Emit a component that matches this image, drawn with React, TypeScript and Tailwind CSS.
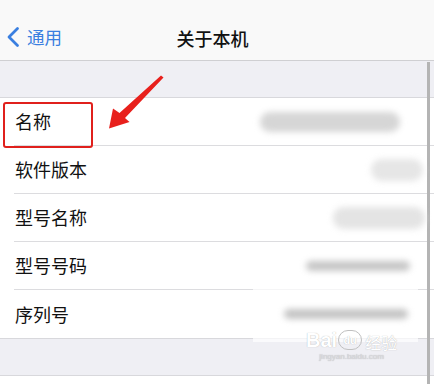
const rows = [
  { label: '名称', value: 'w-[140px] h-[20px] bg-[#d6d6d6] mr-[34px]' },
  { label: '软件版本', value: 'w-[52px] h-[22px] bg-[#e6e6e6] mr-[11px]' },
  { label: '型号名称', value: 'w-[92px] h-[22px] bg-[#e4e4e4] mr-[9px]' },
  { label: '型号号码', value: 'w-[104px] h-[10px] bg-[#c6c6c6] mr-[24px]' },
  { label: '序列号', value: 'w-[124px] h-[10px] bg-[#c4c4c4] mr-[26px]' },
];

export default function App() {
  return (
    <div
      className="relative w-[434px] h-[384px] overflow-hidden bg-[#efeff4]"
      style={{ fontFamily: '"Noto Sans CJK SC", "Noto Sans", sans-serif' }}
    >
      {/* Nav bar */}
      <div className="h-[61px] bg-[#f9f9f9] border-b border-[#cfcfd2] grid grid-cols-[1fr_auto_1fr] items-start pt-[26px] pr-[9px]">
        <div className="flex items-center gap-[7px] pl-[6px] text-[#3a7fe0]">
          <svg width="14" height="22" viewBox="0 0 14 22" fill="none">
            <path d="M11.5 2.5 L3 11 L11.5 19.5" stroke="#3a7fe0" strokeWidth="2.8" strokeLinecap="round" strokeLinejoin="round" />
          </svg>
          <span className="text-[17.5px] leading-[22px]">通用</span>
        </div>
        <div className="text-[18px] leading-[24px] text-[#111] font-medium">关于本机</div>
        <div />
      </div>

      {/* Gray section header */}
      <div className="h-[36px]" />

      {/* Rows */}
      <div className="bg-white border-t border-[#d8d8dc] border-b">
        {rows.map((r, i) => (
          <div key={r.label} className="pl-[14px]">
            <div
              className={
                'h-[48px] flex items-center justify-between ' +
                (i < rows.length - 1 ? 'border-b border-[#dcdcdf]' : '')
              }
            >
              <span className="pl-[1px] text-[18px] text-[#111]">{r.label}</span>
              <div className={'relative z-10 rounded-full blur-[3px] ' + r.value} />
            </div>
          </div>
        ))}
      </div>

      {/* Bottom gray section */}
      <div className="h-[37px] border-b border-[#d8d8dc]" />
      <div className="h-[12px] bg-white" />

      {/* Watermark backdrop */}
      <div className="absolute left-[253px] top-[280px] w-[165px] h-[62px] bg-white/70" />

      {/* Baidu watermark */}
      <div className="absolute left-[306px] top-[330px] flex flex-col items-center text-white [text-shadow:0_0_1px_#a8a8a8]">
        <div className="flex items-end gap-[1px] leading-none">
          <span className="text-[20px] font-bold" style={{ fontFamily: '"Liberation Sans", sans-serif' }}>Bai</span>
          <span className="relative w-[24px] h-[20px] rounded-[10px] border border-[#c0c0c0] text-[11px] font-bold flex items-center justify-center" style={{ fontFamily: '"Liberation Sans", sans-serif' }}>
            du
          </span>
          <span className="text-[16px] ml-[2px]">经验</span>
        </div>
        <div className="text-[8px] text-[#dcdce0] leading-none mt-[3px]" style={{ fontFamily: '"Liberation Sans", sans-serif' }}>
          jingyan.baidu.com
        </div>
      </div>

      {/* Red highlight box */}
      <div className="absolute left-[3px] top-[102px] w-[90px] h-[46px] border-[2.5px] border-[#e0201c] rounded-[3px]" />

      {/* Red arrow */}
      <svg className="absolute left-0 top-0" width="434" height="384" viewBox="0 0 434 384">
        <polygon
          points="161,75.5 163.5,77.5 125,118 129.5,122 109,128.5 113,108.5 119.5,113"
          fill="#e8201c"
        />
      </svg>

      {/* Scroll indicator */}
      <div className="absolute left-[427px] top-[62px] w-[3px] h-[322px] bg-[#b4b4b4]" />
    </div>
  );
}
